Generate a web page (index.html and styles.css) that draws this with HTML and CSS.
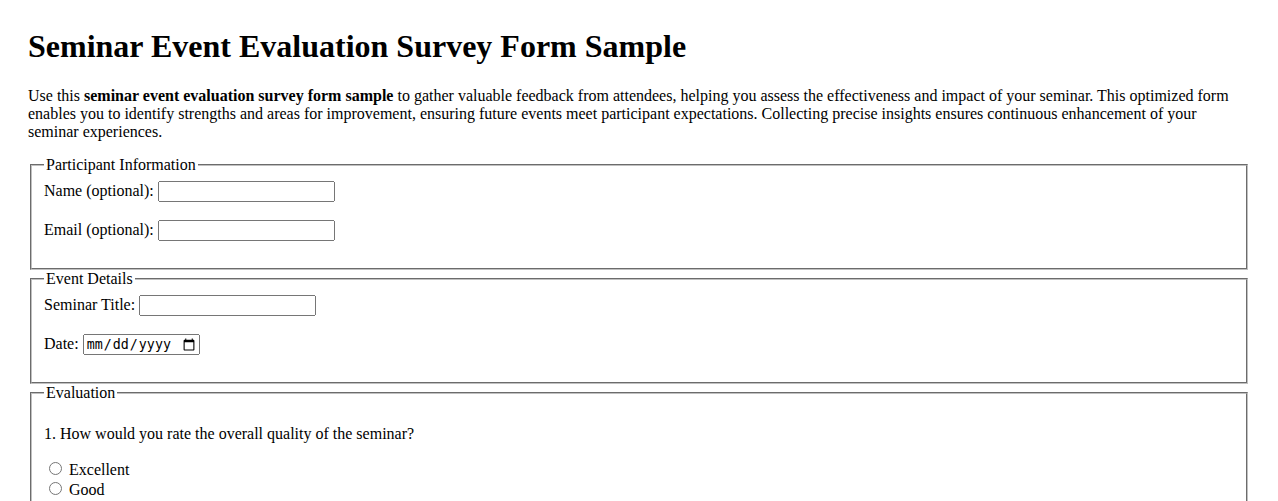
FILE: index.html
```html
<!DOCTYPE html>
<html lang="en">
<head>
<meta charset="utf-8">
<title>Seminar Event Evaluation Survey Form Sample</title>
<link rel="stylesheet" href="styles.css">
</head>
<body>
<h1 class="title">Seminar Event Evaluation Survey Form Sample</h1>
<p class="intro">Use this <strong>seminar event evaluation survey form sample</strong> to gather valuable feedback from attendees, helping you assess the effectiveness and impact of your seminar. This optimized form enables you to identify strengths and areas for improvement, ensuring future events meet participant expectations. Collecting precise insights ensures continuous enhancement of your seminar experiences.</p>
<form class="survey">
  <fieldset class="group">
    <legend>Participant Information</legend>
    <label for="name">Name (optional):</label> <input class="text-field" type="text" id="name" name="name"><br><br>
    <label for="email">Email (optional):</label> <input class="text-field" type="email" id="email" name="email"><br><br>
  </fieldset>
  <fieldset class="group">
    <legend>Event Details</legend>
    <label for="title">Seminar Title:</label> <input class="text-field" type="text" id="title" name="title"><br><br>
    <label for="date">Date:</label> <input class="date-field" type="date" id="date" name="date"><br><br>
  </fieldset>
  <fieldset class="group">
    <legend>Evaluation</legend>
    <p class="question">1. How would you rate the overall quality of the seminar?</p>
    <label class="option"><input type="radio" name="quality" value="excellent"> Excellent</label><br>
    <label class="option"><input type="radio" name="quality" value="good"> Good</label><br>
    <label class="option"><input type="radio" name="quality" value="average"> Average</label><br>
    <label class="option"><input type="radio" name="quality" value="poor"> Poor</label><br>
  </fieldset>
</form>
</body>
</html>
```
FILE: styles.css
```css
body {
  margin: 8px;
  padding: 20px;
  font-family: "Liberation Serif", "Times New Roman", serif;
  font-size: 16px;
  color: #000;
  background: #fff;
}

.title {
  font-size: 32px;
  margin: 0 0 22px;
}

.intro {
  margin: 16px 0 15px;
}

.group {
  margin: 0 2px;
  padding: 7px 12px 9px;
  border: 2px groove #c0c0c0;
}

.text-field {
  width: 169px;
  box-sizing: content-box;
}

.date-field {
  width: 117px;
  box-sizing: border-box;
}

.question {
  margin: 16px 0;
}
```
